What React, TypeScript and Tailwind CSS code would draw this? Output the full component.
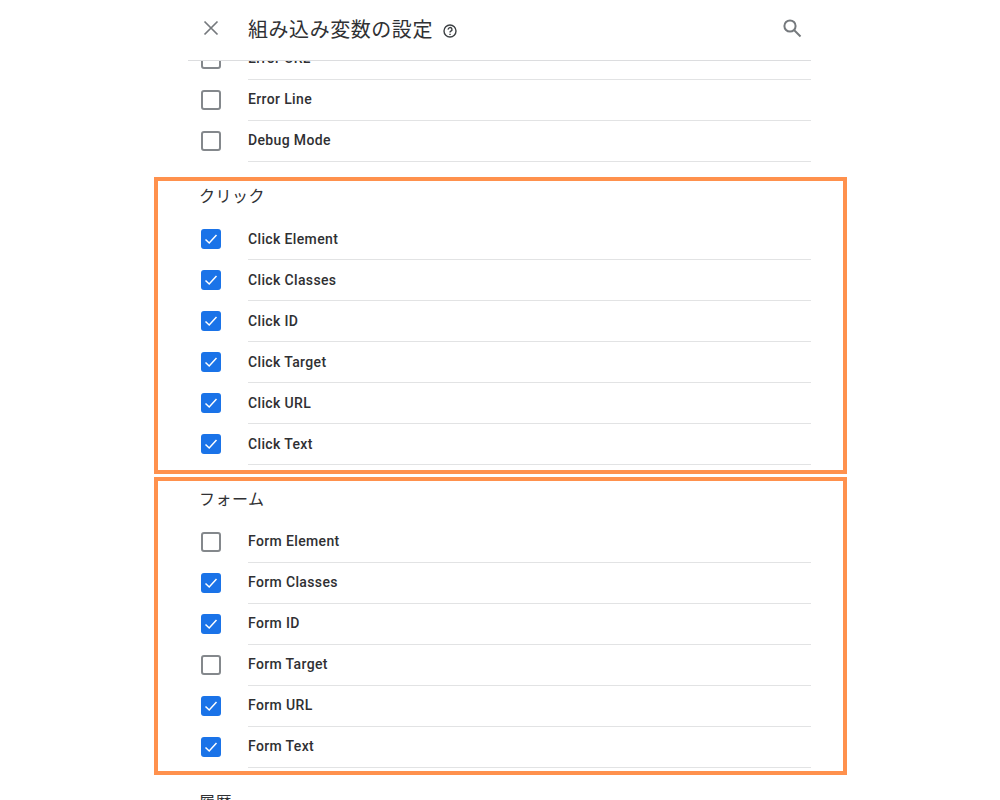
import React from "react";

function Row({ label, checked = false, low = false }: { label: string; checked?: boolean; low?: boolean }) {
  return (
    <div className="flex h-[41px] items-stretch">
      <div className="flex w-[60px] items-center pb-px pl-[13px]">
        {checked ? (
          <div className="flex h-5 w-5 items-center justify-center rounded-[3px] bg-[#1a73e8]">
            <svg width="14" height="14" viewBox="0 0 14 14" fill="none" stroke="#ffffff" strokeWidth="1.5">
              <path d="M1.5 7.5 L5.2 11 L12.5 3" />
            </svg>
          </div>
        ) : (
          <div className="h-5 w-5 rounded-[3px] border-2 border-[#84888c] bg-white" />
        )}
      </div>
      <div
        className={
          low
            ? "flex flex-1 items-center border-b border-[#e2e3e4] pt-px text-[14px] font-medium tracking-[0.36px] text-[#2f3033]"
            : "flex flex-1 items-center border-b border-[#e2e3e4] pb-px text-[14px] font-medium tracking-[0.36px] text-[#2f3033]"
        }
      >
        {label}
      </div>
    </div>
  );
}

function Heading({ children }: { children: React.ReactNode }) {
  return (
    <div className="flex h-[57px] items-center pl-[11px] pt-[13px] text-[16px] tracking-[0.5px] text-[#303134]">{children}</div>
  );
}

export default function App() {
  return (
    <div
      className="relative h-[800px] w-[1000px] overflow-hidden bg-white"
      style={{ fontFamily: 'Roboto, "Noto Sans CJK JP", sans-serif' }}
    >
      <div className="ml-[188px] flex h-full w-[623px] flex-col">
        <header className="relative z-10 flex h-[61px] shrink-0 items-center border-b border-[#dcdddf] bg-white">
          <svg className="ml-[14px] mb-[4px]" width="18" height="18" viewBox="0 0 18 18" fill="none" stroke="#75797d" strokeWidth="1.7">
            <path d="M2.5 2.5 L15.5 15.5 M15.5 2.5 L2.5 15.5" />
          </svg>
          <h1 className="ml-[28px] text-[20px] font-normal tracking-[0.55px] text-[#303134]">組み込み変数の設定</h1>
          <svg className="ml-[9px] mt-[2px]" width="16" height="16" viewBox="0 0 16 16" fill="none" stroke="#3c4043" strokeWidth="1.4">
            <circle cx="8" cy="8" r="6" />
            <path d="M6.2 6.6 A1.9 1.9 0 1 1 8.9 8.2 Q8 8.7 8 9.6" />
            <path d="M8 10.7 V12" />
          </svg>
          <svg className="ml-auto mr-[8px] mb-[4px]" width="22" height="22" viewBox="0 0 22 22" fill="none" stroke="#75797d" strokeWidth="2">
            <circle cx="9" cy="9" r="5.6" />
            <path d="M13 13 L19.5 19.5" />
          </svg>
        </header>
        <main className="-mt-[22px]">
          <Row label="Error URL" />
          <Row label="Error Line" />
          <Row label="Debug Mode" />
          <Heading>クリック</Heading>
          <Row label="Click Element" checked low />
          <Row label="Click Classes" checked low />
          <Row label="Click ID" checked low />
          <Row label="Click Target" checked low />
          <Row label="Click URL" checked low />
          <Row label="Click Text" checked low />
          <Heading>フォーム</Heading>
          <Row label="Form Element" />
          <Row label="Form Classes" checked />
          <Row label="Form ID" checked />
          <Row label="Form Target" />
          <Row label="Form URL" checked />
          <Row label="Form Text" checked />
          <Heading>履歴</Heading>
        </main>
      </div>
      <div className="pointer-events-none absolute left-[154px] top-[177px] z-20 h-[297px] w-[693px] border-4 border-[#ff914d]" />
      <div className="pointer-events-none absolute left-[154px] top-[477px] z-20 h-[298px] w-[693px] border-4 border-[#ff914d]" />
    </div>
  );
}
